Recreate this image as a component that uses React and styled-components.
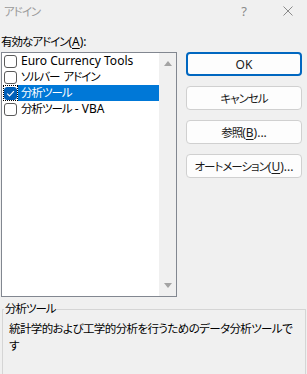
import styled, { createGlobalStyle } from 'styled-components';

const Global = createGlobalStyle`
  html, body {
    margin: 0;
    padding: 0;
    background: #f0f0f0;
    overflow: hidden;
  }
`;

const Dialog = styled.div`
  width: 307px;
  height: 374px;
  background: #f0f0f0;
  display: flex;
  flex-direction: column;
  overflow: hidden;
  font-family: "Noto Sans", "Noto Sans CJK JP", sans-serif;
  font-feature-settings: "palt";
  font-size: 12px;
  color: #000;
`;

/* Japanese runs are set a little smaller and tighter, like Yu Gothic UI */
const Jp = styled.span`
  font-size: 11.5px;
  letter-spacing: ${p => p.$ls ?? -1}px;
`;

const Gap = styled.span`
  display: inline-block;
  width: ${p => p.$w}px;
`;

/* Title bar */
const TitleBar = styled.div`
  height: 22px;
  display: flex;
  align-items: center;
  padding-left: 4px;
  color: #9a9a9a;
  flex-shrink: 0;
`;

const TitleText = styled.span`
  flex: 1;
`;

const TitleButton = styled.span`
  width: ${p => p.$w}px;
  display: flex;
  justify-content: center;
  align-items: center;
  color: #8a8a8a;
  font-size: 13px;
`;

const Body = styled.div`
  display: flex;
  flex-direction: column;
  padding: 0 5px 0 1px;
  flex: 1;
  min-height: 0;
`;

const FieldLabel = styled.div`
  height: 16px;
  line-height: 16px;
  margin: 12px 0 2px 0;
`;

const Key = styled.span`
  text-decoration: underline;
  text-underline-offset: 2px;
`;

const MainRow = styled.div`
  display: flex;
  gap: 9px;
  height: 245px;
  flex-shrink: 0;
`;

/* List box with checkboxes */
const ListBox = styled.div`
  width: 176px;
  box-sizing: border-box;
  border: 1px solid #828790;
  background: #fff;
  display: flex;
`;

const Items = styled.div`
  flex: 1;
  display: flex;
  flex-direction: column;
`;

const Item = styled.div`
  height: 16px;
  display: flex;
  align-items: stretch;
`;

const CheckCell = styled.div`
  width: 15px;
  margin-left: 1px;
  display: flex;
  align-items: center;
  justify-content: center;
  box-sizing: border-box;
  outline: ${p => (p.$focus ? '1px dotted #000' : 'none')};
  outline-offset: -1px;
`;

const Box = styled.div`
  width: 13px;
  height: 13px;
  box-sizing: border-box;
  border-radius: 3px;
  border: 1px solid ${p => (p.$checked ? '#005fb8' : '#5a5a5a')};
  background: ${p => (p.$checked ? '#005fb8' : '#fff')};
  display: flex;
  align-items: center;
  justify-content: center;
`;

const ItemLabel = styled.div`
  flex: 1;
  padding-left: 3px;
  line-height: 16px;
  white-space: nowrap;
  background: ${p => (p.$selected ? '#0078d7' : 'transparent')};
  color: ${p => (p.$selected ? '#fff' : '#000')};
`;

const ScrollBar = styled.div`
  width: 17px;
  background: #f0f0f0;
  display: flex;
  flex-direction: column;
  justify-content: space-between;
  align-items: center;
  padding: 8px 0;
  box-sizing: border-box;
`;

const Arrow = styled.div`
  width: 0;
  height: 0;
  border-left: 4px solid transparent;
  border-right: 4px solid transparent;
  ${p => (p.$down ? 'border-top: 5px solid #a3a3a3;' : 'border-bottom: 5px solid #a3a3a3;')}
`;

/* Buttons column */
const Buttons = styled.div`
  display: flex;
  flex-direction: column;
  gap: 10px;
  width: 116px;
`;

const Button = styled.button`
  height: 24px;
  box-sizing: border-box;
  border-radius: 4px;
  background: #fdfdfd;
  border: ${p => (p.$default ? '2px solid #0067c0' : '1px solid #d0d0d0')};
  font: inherit;
  color: #1a1a1a;
  padding: 0;
  display: flex;
  align-items: center;
  justify-content: center;
  white-space: nowrap;
`;

/* Description group box */
const Group = styled.fieldset`
  margin: 4px -4px 0 1px;
  padding: 0 7px 0 6px;
  border: 1px solid #d5d5d5;
  border-bottom: none;
  flex: 1;
  min-width: 0;
`;

const Legend = styled.legend`
  padding: 0 1px;
  margin-left: -5px;
  line-height: 16px;
`;

const Description = styled.div`
  line-height: 17px;
  margin-top: 3px;
`;

const items = [
  { key: 'euro', name: 'Euro Currency Tools', checked: false },
  { key: 'solver', name: <><Jp>ソルバー</Jp><Gap $w={4} /><Jp>アドイン</Jp></>, checked: false },
  { key: 'atp', name: <Jp>分析ツール</Jp>, checked: true, selected: true },
  { key: 'vba', name: <><Jp>分析ツール</Jp> - VBA</>, checked: false },
];

const CheckMark = () => (
  <svg width="9" height="9" viewBox="0 0 9 9">
    <path d="M1.2 4.6 L3.5 6.9 L7.9 2.2" fill="none" stroke="#fff" strokeWidth="1.1" />
  </svg>
);

const CloseIcon = () => (
  <svg width="10" height="10" viewBox="0 0 10 10">
    <path d="M0.5 0.5 L9.5 9.5 M9.5 0.5 L0.5 9.5" stroke="#8a8a8a" strokeWidth="1" />
  </svg>
);

export default function App() {
  return (
    <Dialog>
      <Global />
      <TitleBar>
        <TitleText>
          <Jp>アドイン</Jp>
        </TitleText>
        <TitleButton $w={40}>?</TitleButton>
        <TitleButton $w={5} />
        <TitleButton $w={38}>
          <CloseIcon />
        </TitleButton>
      </TitleBar>
      <Body>
        <FieldLabel>
          <Jp>有効なアドイン</Jp>(<Key>A</Key>):
        </FieldLabel>
        <MainRow>
          <ListBox>
            <Items>
              {items.map(it => (
                <Item key={it.key}>
                  <CheckCell $focus={it.selected}>
                    <Box $checked={it.checked}>{it.checked && <CheckMark />}</Box>
                  </CheckCell>
                  <ItemLabel $selected={it.selected}>{it.name}</ItemLabel>
                </Item>
              ))}
            </Items>
            <ScrollBar>
              <Arrow />
              <Arrow $down />
            </ScrollBar>
          </ListBox>
          <Buttons>
            <Button $default>OK</Button>
            <Button>
              <Jp>キャンセル</Jp>
            </Button>
            <Button>
              <Jp>参照</Jp>(<Key>B</Key>)...
            </Button>
            <Button>
              <Jp>オートメーション</Jp>(<Key>U</Key>)...
            </Button>
          </Buttons>
        </MainRow>
        <Group>
          <Legend>
            <Jp>分析ツール</Jp>
          </Legend>
          <Description>
            <Jp $ls={-0.6}>統計学的および工学的分析を行うためのデータ分析ツールです</Jp>
          </Description>
        </Group>
      </Body>
    </Dialog>
  );
}
